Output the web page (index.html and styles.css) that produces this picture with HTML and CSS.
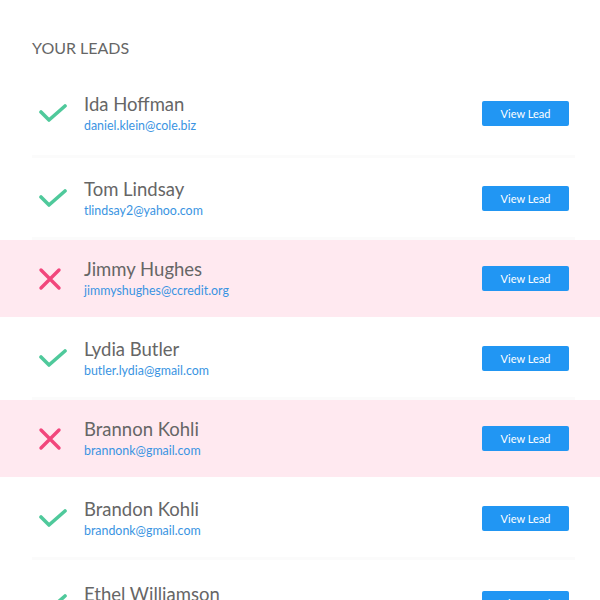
FILE: index.html
```html
<!DOCTYPE html>
<html>
<head>
<meta charset="utf-8">
<link rel="stylesheet" href="styles.css">
</head>
<body>
<div class="page">
  <h1 class="title">YOUR LEADS</h1>
  <ul class="leads">
    <li class="lead lead-first">
      <span class="status"><svg class="icon" viewBox="0 0 30 20"><path d="M3 8 L11 16 L27 2" /></svg></span>
      <div class="info"><div class="name">Ida Hoffman</div><div class="email">daniel.klein@cole.biz</div></div>
      <button class="btn">View Lead</button>
    </li>
    <li class="lead">
      <span class="status"><svg class="icon" viewBox="0 0 30 20"><path d="M3 8 L11 16 L27 2" /></svg></span>
      <div class="info"><div class="name">Tom Lindsay</div><div class="email">tlindsay2@yahoo.com</div></div>
      <button class="btn">View Lead</button>
    </li>
    <li class="lead lead-rejected">
      <span class="status"><svg class="icon icon-x" viewBox="0 0 24 24"><path d="M3 3 L21 21 M21 3 L3 21" /></svg></span>
      <div class="info"><div class="name">Jimmy Hughes</div><div class="email">jimmyshughes@ccredit.org</div></div>
      <button class="btn">View Lead</button>
    </li>
    <li class="lead">
      <span class="status"><svg class="icon" viewBox="0 0 30 20"><path d="M3 8 L11 16 L27 2" /></svg></span>
      <div class="info"><div class="name">Lydia Butler</div><div class="email">butler.lydia@gmail.com</div></div>
      <button class="btn">View Lead</button>
    </li>
    <li class="lead lead-rejected">
      <span class="status"><svg class="icon icon-x" viewBox="0 0 24 24"><path d="M3 3 L21 21 M21 3 L3 21" /></svg></span>
      <div class="info"><div class="name">Brannon Kohli</div><div class="email">brannonk@gmail.com</div></div>
      <button class="btn">View Lead</button>
    </li>
    <li class="lead lead-gap">
      <span class="status"><svg class="icon" viewBox="0 0 30 20"><path d="M3 8 L11 16 L27 2" /></svg></span>
      <div class="info"><div class="name">Brandon Kohli</div><div class="email">brandonk@gmail.com</div></div>
      <button class="btn">View Lead</button>
    </li>
    <li class="lead">
      <span class="status"><svg class="icon" viewBox="0 0 30 20"><path d="M3 8 L11 16 L27 2" /></svg></span>
      <div class="info"><div class="name">Ethel Williamson</div><div class="email">ethel.w@gmail.com</div></div>
      <button class="btn">View Lead</button>
    </li>
  </ul>
</div>
</body>
</html>
```

FILE: styles.css
```css
html, body {
  margin: 0;
  padding: 0;
  background: #ffffff;
  font-family: "Lato", "Noto Sans", sans-serif;
}
.page {
  width: 600px;
  height: 600px;
  overflow: hidden;
}
.title {
  margin: 0;
  padding: 38px 32px 0;
  height: 37px;
  font-size: 16px;
  line-height: 20px;
  font-weight: 400;
  color: #666666;
}
.leads {
  list-style: none;
  margin: 0;
  padding: 0;
}
.lead {
  display: flex;
  align-items: center;
  height: 77px;
  padding: 0 31px 0 38px;
  position: relative;
  border-bottom: 3px solid transparent;
  background-clip: padding-box;
}
.lead::after {
  content: "";
  position: absolute;
  left: 32px;
  right: 25px;
  bottom: -3px;
  height: 3px;
  background: #fbfbfb;
}
.lead-first {
  padding-bottom: 3px;
  margin-bottom: 2px;
}
.lead-gap {
  margin-bottom: 5px;
}
.lead-rejected {
  background-color: #ffe9f0;
}
.lead-rejected::after {
  background: transparent;
}
.status {
  width: 46px;
  display: flex;
  align-items: center;
}
.icon {
  width: 30px;
  height: 20px;
  fill: none;
  stroke: #4fc99b;
  stroke-width: 3.6;
  stroke-linecap: round;
  stroke-linejoin: round;
}
.icon-x {
  width: 24px;
  height: 24px;
  stroke: #f2467c;
  stroke-width: 3.4;
}
.info {
  flex: 1;
  display: flex;
  flex-direction: column;
}
.name {
  font-size: 18.5px;
  line-height: 22px;
  color: #666666;
}
.email {
  margin-top: 3px;
  font-size: 12.4px;
  line-height: 16px;
  color: #3a94e2;
}
.btn {
  width: 87px;
  height: 25px;
  border: none;
  border-radius: 2px;
  background: #2196f3;
  color: #ffffff;
  font-family: inherit;
  font-size: 11px;
  padding: 0;
  cursor: pointer;
}
```
